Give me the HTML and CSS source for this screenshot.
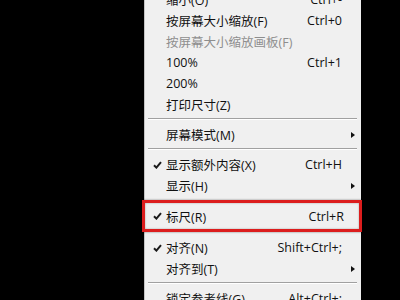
FILE: index.html
```html
<!DOCTYPE html>
<html lang="zh-CN">
<head>
  <meta charset="UTF-8" />
  <title>视图菜单</title>
  <link rel="stylesheet" href="styles.css">
</head>
<body>
  <div class="menu">
    <div class="item"><span class="check"></span><span class="label">缩小(O)</span><span class="key">Ctrl+-</span><span class="sub"></span></div>
    <div class="item"><span class="check"></span><span class="label">按屏幕大小缩放(F)</span><span class="key">Ctrl+0</span><span class="sub"></span></div>
    <div class="item disabled"><span class="check"></span><span class="label">按屏幕大小缩放画板(F)</span><span class="key"></span><span class="sub"></span></div>
    <div class="item"><span class="check"></span><span class="label">100%</span><span class="key">Ctrl+1</span><span class="sub"></span></div>
    <div class="item"><span class="check"></span><span class="label">200%</span><span class="key"></span><span class="sub"></span></div>
    <div class="item"><span class="check"></span><span class="label">打印尺寸(Z)</span><span class="key"></span><span class="sub"></span></div>
    <div class="sep"></div>
    <div class="item"><span class="check"></span><span class="label">屏幕模式(M)</span><span class="key"></span><span class="sub"><i class="arrow"></i></span></div>
    <div class="sep"></div>
    <div class="item"><span class="check"><svg viewBox="0 0 9 8" width="9" height="8"><path d="M1 4.2 L3.4 6.6 L8 1.2" /></svg></span><span class="label">显示额外内容(X)</span><span class="key">Ctrl+H</span><span class="sub"></span></div>
    <div class="item"><span class="check"></span><span class="label">显示(H)</span><span class="key"></span><span class="sub"><i class="arrow"></i></span></div>
    <div class="item marked"><span class="check"><svg viewBox="0 0 9 8" width="9" height="8"><path d="M1 4.2 L3.4 6.6 L8 1.2" /></svg></span><span class="label">标尺(R)</span><span class="key">Ctrl+R</span><span class="sub"></span></div>
    <div class="item"><span class="check"><svg viewBox="0 0 9 8" width="9" height="8"><path d="M1 4.2 L3.4 6.6 L8 1.2" /></svg></span><span class="label">对齐(N)</span><span class="key">Shift+Ctrl+;</span><span class="sub"></span></div>
    <div class="item"><span class="check"></span><span class="label">对齐到(T)</span><span class="key"></span><span class="sub"><i class="arrow"></i></span></div>
    <div class="sep"></div>
    <div class="item"><span class="check"></span><span class="label">锁定参考线(G)</span><span class="key">Alt+Ctrl+;</span><span class="sub"></span></div>
  </div>
</body>
</html>
```

FILE: styles.css
```css
html, body {
  margin: 0;
  background: #000;
  overflow: hidden;
}
body {
  font-family: "Open Sans", "Noto Sans CJK SC", sans-serif;
  font-size: 12.5px;
  color: #111;
}
.menu {
  margin: -11px 0 0 144px;
  width: 216px;
  background: #f0f0f0;
  border-left: 1px solid #c4c4c4;
}
.item {
  display: grid;
  grid-template-columns: 21px 1fr auto 19px;
  align-items: center;
  height: 21px;
  white-space: nowrap;
}
.item.disabled {
  color: #8e8e8e;
}
.check {
  display: flex;
  justify-content: flex-end;
  padding-right: 4px;
}
.check svg path {
  fill: none;
  stroke: #1a1a1a;
  stroke-width: 2;
}
.key {
  text-align: right;
}
.sub {
  display: flex;
  justify-content: center;
  padding-left: 3px;
}
.arrow {
  width: 0;
  height: 0;
  border-top: 3.5px solid transparent;
  border-bottom: 3.5px solid transparent;
  border-left: 4px solid #111;
}
.sep {
  height: 9px;
  box-sizing: border-box;
  padding-top: 3px;
  margin: 0 4px 0 3px;
}
.sep::before {
  content: "";
  display: block;
  border-top: 1px solid #a0a0a0;
  border-bottom: 1px solid #fff;
}
.item.marked {
  height: 26px;
  margin: 4px -1px 5px -3px;
  border: 3px solid #dc1d1d;
  box-shadow: 0 0 2px rgba(0, 0, 0, 0.45), inset 0 0 2px rgba(0, 0, 0, 0.35);
  grid-template-columns: 21px 1fr auto 15px;
}
```
